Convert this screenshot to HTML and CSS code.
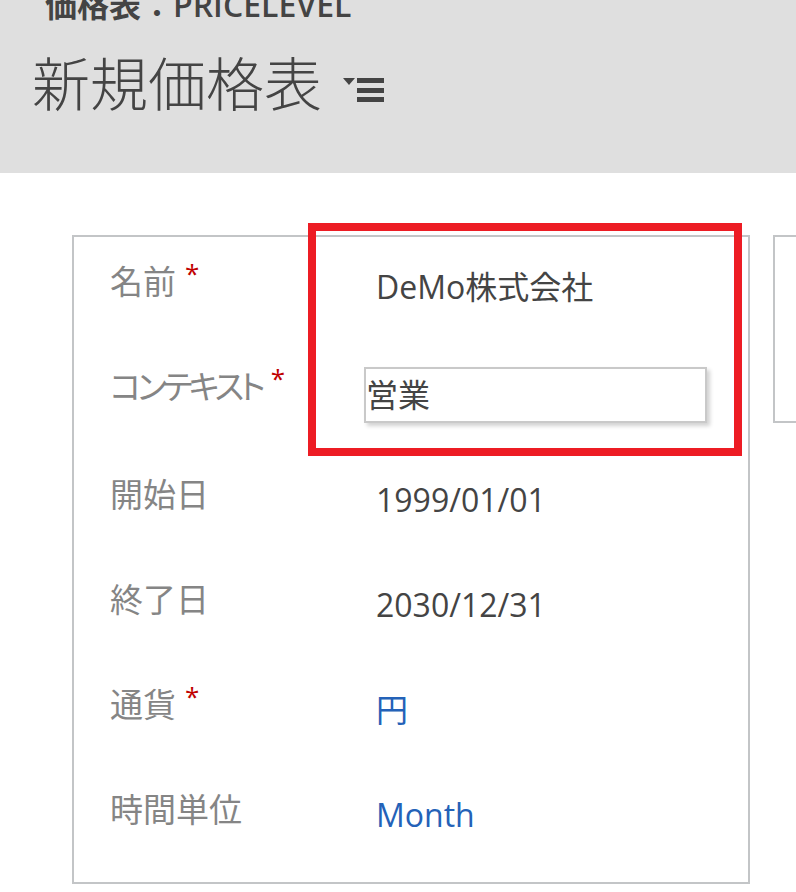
FILE: index.html
```html
<!DOCTYPE html>
<html lang="ja">
<head>
<meta charset="utf-8">
<title>新規価格表</title>
<link rel="stylesheet" href="styles.css">
</head>
<body>
<header class="header">
  <div class="entity">価格表：PRICELEVEL</div>
  <div class="title-row">
    <h1 class="title">新規価格表</h1>
    <svg class="menu-icon" width="42" height="25" viewBox="0 0 42 25" aria-hidden="true">
      <polygon points="0,0 12,0 6,7" fill="#444"/>
      <rect x="14" y="0" width="27" height="5" fill="#444"/>
      <rect x="14" y="10" width="27" height="5" fill="#444"/>
      <rect x="14" y="19" width="27" height="5" fill="#444"/>
    </svg>
  </div>
</header>
<main class="main">
  <section class="card">
    <div class="row">
      <div class="label">名前<span class="req">*</span></div>
      <div class="value">DeMo株式会社</div>
    </div>
    <div class="row row-input">
      <div class="label"><span class="kana">コンテキスト</span><span class="req">*</span></div>
      <div class="input">営業</div>
    </div>
    <div class="row">
      <div class="label">開始日</div>
      <div class="value">1999/01/01</div>
    </div>
    <div class="row">
      <div class="label">終了日</div>
      <div class="value">2030/12/31</div>
    </div>
    <div class="row">
      <div class="label">通貨<span class="req">*</span></div>
      <div class="value link">円</div>
    </div>
    <div class="row">
      <div class="label">時間単位</div>
      <div class="value link">Month</div>
    </div>
  </section>
  <section class="card card-side"></section>
</main>
<div class="highlight"></div>
</body>
</html>
```

FILE: styles.css
```css
html, body {
  margin: 0;
  padding: 0;
  background: #ffffff;
  overflow: hidden;
}

body {
  font-family: "Open Sans", "Noto Sans CJK JP", sans-serif;
  color: #444444;
  position: relative;
  width: 796px;
  height: 892px;
}

.header {
  background: #dfdfdf;
  height: 173px;
  overflow: hidden;
}

.entity {
  font-family: "Open Sans", "Noto Sans CJK JP", sans-serif;
  font-size: 32px;
  font-weight: 600;
  line-height: 40px;
  margin-top: -15px;
  padding-left: 45px;
  color: #444444;
  white-space: nowrap;
}

.title-row {
  display: flex;
  align-items: flex-start;
  padding-left: 32px;
  margin-top: 21px;
}

.title {
  margin: 0;
  font-family: "Noto Sans CJK JP", sans-serif;
  font-weight: 300;
  font-size: 58px;
  line-height: 70px;
  color: #444444;
}

.menu-icon {
  margin-left: 21px;
  margin-top: 32px;
  flex-shrink: 0;
}

.main {
  display: flex;
  align-items: flex-start;
  padding-top: 62px;
  padding-left: 72px;
}

.card {
  box-sizing: border-box;
  width: 678px;
  height: 649px;
  border: 2px solid #c3c5c7;
  padding-top: 23px;
  padding-left: 36px;
  flex-shrink: 0;
}

.card-side {
  width: 120px;
  height: 188px;
  margin-left: 23px;
  padding: 0;
}

.row {
  display: flex;
  align-items: flex-start;
  height: 105px;
}

.row-input {
  height: 108px;
}

.label {
  width: 266px;
  flex-shrink: 0;
  font-family: "Noto Sans CJK JP", sans-serif;
  font-feature-settings: "palt";
  font-size: 33px;
  line-height: 40px;
  color: #858585;
  white-space: nowrap;
}

.kana {
  letter-spacing: -4px;
}

.req {
  display: inline-block;
  vertical-align: top;
  margin-left: 9px;
  font-family: "Open Sans", sans-serif;
  font-size: 26px;
  line-height: 26px;
  color: #c00000;
}

.value {
  font-size: 32px;
  line-height: 40px;
  padding-top: 7px;
  color: #444444;
  white-space: nowrap;
}

.value.link {
  color: #2462b8;
}

.input {
  box-sizing: border-box;
  width: 343px;
  height: 56px;
  margin-left: -12px;
  margin-top: 2px;
  border: 2px solid #c9c9c9;
  box-shadow: 3px 3px 4px rgba(0, 0, 0, 0.18);
  font-family: "Noto Sans CJK JP", sans-serif;
  font-size: 32px;
  line-height: 40px;
  padding-top: 4px;
  color: #444444;
}

.highlight {
  position: absolute;
  left: 308px;
  top: 223px;
  width: 434px;
  height: 233px;
  box-sizing: border-box;
  border: 8px solid #ed1c24;
  pointer-events: none;
}
```
